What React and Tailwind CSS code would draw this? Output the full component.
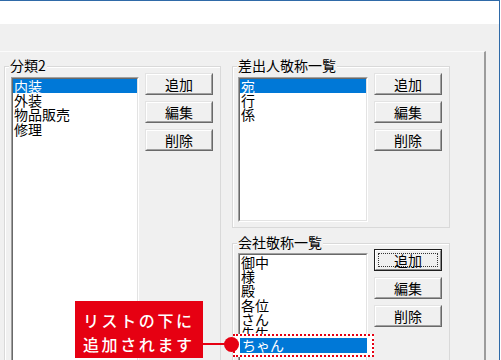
import React from "react";

const FONT = "font-['Noto_Sans_CJK_JP','Noto_Sans_CJK_SC',sans-serif]";

function Btn({ label, focused }) {
  if (focused) {
    return (
      <div className="w-[68px] h-[22px] border border-[#1e1e1e]">
        <div className="h-full border border-t-white border-l-white border-r-[#8a8a8a] border-b-[#8a8a8a] bg-[#f0f0f0] p-[2px]">
          <div className="h-full border border-dotted border-[#333] flex items-center justify-center text-[14px] leading-none text-black">
            {label}
          </div>
        </div>
      </div>
    );
  }
  return (
    <div className="w-[68px] h-[22px] border border-t-[#e3e3e3] border-l-[#e3e3e3] border-r-[#696969] border-b-[#696969]">
      <div className="h-full border border-t-white border-l-white border-r-[#a0a0a0] border-b-[#a0a0a0] bg-[#f0f0f0] flex items-center justify-center text-[14px] leading-none text-black">
        {label}
      </div>
    </div>
  );
}

function ButtonStack({ focusedFirst }) {
  return (
    <div className="flex flex-col gap-[6px]">
      <Btn label="追加" focused={focusedFirst} />
      <Btn label="編集" />
      <Btn label="削除" />
    </div>
  );
}

function ListBox({ items, selected, width, height }) {
  return (
    <div
      className={`${width} ${height} border border-t-[#a0a0a0] border-l-[#a0a0a0] border-r-white border-b-white`}
    >
      <div className="h-full border border-t-[#696969] border-l-[#696969] border-r-[#e3e3e3] border-b-[#e3e3e3] bg-white overflow-hidden">
        {items.map((it, i) => (
          <div
            key={it}
            className={`h-[14.2px] leading-[14px] text-[14px] pl-[1px] whitespace-nowrap ${
              i === selected ? "bg-[#0078d7] text-white" : "text-black"
            }`}
          >
            {it}
          </div>
        ))}
      </div>
    </div>
  );
}

function GroupBox({ title, children, className }) {
  return (
    <div className={`relative border border-[#d9d9d9] shadow-[inset_1px_1px_0_#ffffff] ${className}`}>
      <span className="absolute left-[4px] top-[-9px] px-[1px] bg-[#f0f0f0] text-[14px] leading-[14px] text-black whitespace-nowrap">
        {title}
      </span>
      {children}
    </div>
  );
}

export default function App() {
  return (
    <div className={`relative w-[500px] h-[360px] overflow-hidden bg-[#f0f0f0] border-t border-r border-[#2f6aa8] ${FONT}`}>
      <div className="h-[23px] bg-white" />
      <div className="mt-[27px] w-[486px] h-[320px] border-t border-t-[#fbfbfb] border-r-2 border-r-[#9c9c9c] pl-[4px] pt-[14px]">
        <div className="flex items-start gap-[11px]">
          <GroupBox title="分類2" className="w-[217px] h-[300px] pl-[6px] pr-[7px] pt-[6px]">
            <div className="flex items-start gap-[6px]">
              <div className="mt-[4px]">
                <ListBox
                  items={["内装", "外装", "物品販売", "修理"]}
                  selected={0}
                  width="w-[128px]"
                  height="h-[290px]"
                />
              </div>
              <ButtonStack />
            </div>
          </GroupBox>

          <div className="flex flex-col gap-[15px]">
            <GroupBox title="差出人敬称一覧" className="w-[218px] pl-[5px] pr-[7px] pt-[6px] pb-[5px]">
              <div className="flex items-start gap-[6px]">
                <div className="mt-[4px]">
                  <ListBox
                    items={["宛", "行", "係"]}
                    selected={0}
                    width="w-[130px]"
                    height="h-[145px]"
                  />
                </div>
                <ButtonStack />
              </div>
            </GroupBox>

            <GroupBox title="会社敬称一覧" className="w-[218px] h-[140px] pl-[5px] pr-[7px] pt-[5px]">
              <div className="flex items-start gap-[6px]">
                <div className="mt-[4px]">
                  <ListBox
                    items={["御中", "様", "殿", "各位", "さん", "先生"]}
                    selected={-1}
                    width="w-[130px]"
                    height="h-[130px]"
                  />
                </div>
                <ButtonStack focusedFirst />
              </div>
            </GroupBox>
          </div>
        </div>
      </div>

      {/* callout: new entry appended at the bottom of the list */}
      <div className="absolute left-[75px] top-[300px] w-[128px] h-[57px] bg-[#e60012] pt-[7px] pl-[8px] text-white text-[16px] leading-[24px] font-medium tracking-[2.6px] whitespace-nowrap">
        <div>リストの下に</div>
        <div>追加されます</div>
      </div>
      <div className="absolute left-[203px] top-[342px] w-[24px] h-[2px] bg-[#e60012]" />
      <div className="absolute left-[233px] top-[333px] w-[141px] h-[23px] border-2 border-dotted border-[#e60012] bg-white p-[2px] pl-[5px] pr-[5px]">
        <div className="h-full bg-[#0078d7] text-white text-[14px] leading-[15px] pl-[2px]">ちゃん</div>
      </div>
      <div className="absolute left-[224px] top-[336px] w-[15px] h-[15px] rounded-full bg-[#e60012]" />
    </div>
  );
}
